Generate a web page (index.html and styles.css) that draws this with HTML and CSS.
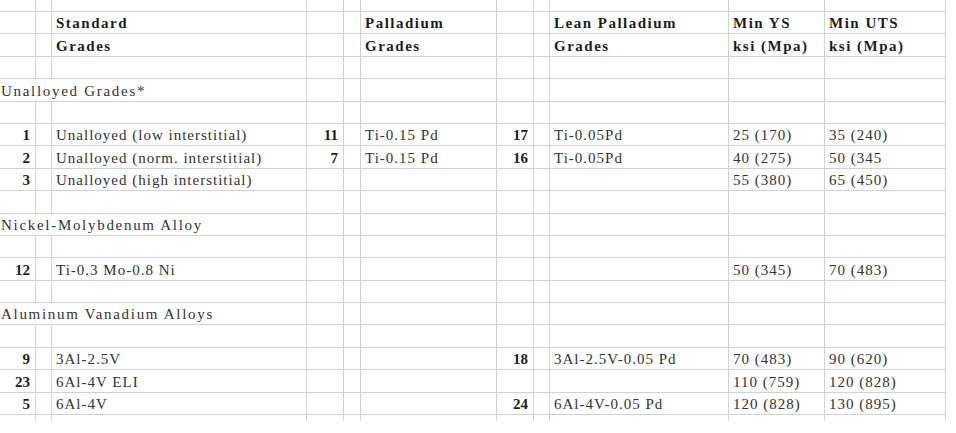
FILE: index.html
```html
<!DOCTYPE html>
<html>
<head>
<meta charset="utf-8">
<link rel="stylesheet" href="styles.css">
</head>
<body>
<div class="sheet">
  <!-- top partial row -->
  <div class="c top"></div><div class="c top"></div><div class="c top"></div><div class="c top"></div><div class="c top"></div><div class="c top"></div><div class="c top"></div><div class="c top"></div><div class="c top"></div><div class="c top"></div><div class="c top"></div>

  <!-- header row 1 -->
  <div class="c"></div><div class="c"></div><div class="c b">Standard</div><div class="c"></div><div class="c"></div><div class="c b">Palladium</div><div class="c"></div><div class="c"></div><div class="c b">Lean Palladium</div><div class="c b">Min YS</div><div class="c b">Min UTS</div>
  <!-- header row 2 -->
  <div class="c"></div><div class="c"></div><div class="c b">Grades</div><div class="c"></div><div class="c"></div><div class="c b">Grades</div><div class="c"></div><div class="c"></div><div class="c b">Grades</div><div class="c b">ksi (Mpa)</div><div class="c b">ksi (Mpa)</div>
  <!-- blank -->
  <div class="c"></div><div class="c"></div><div class="c"></div><div class="c"></div><div class="c"></div><div class="c"></div><div class="c"></div><div class="c"></div><div class="c"></div><div class="c"></div><div class="c"></div>

  <!-- Unalloyed group -->
  <div class="c grp">Unalloyed Grades*</div><div class="c"></div><div class="c"></div><div class="c"></div><div class="c"></div><div class="c"></div><div class="c"></div><div class="c"></div><div class="c"></div>
  <div class="c"></div><div class="c"></div><div class="c"></div><div class="c"></div><div class="c"></div><div class="c"></div><div class="c"></div><div class="c"></div><div class="c"></div><div class="c"></div><div class="c"></div>

  <div class="c n">1</div><div class="c"></div><div class="c">Unalloyed (low interstitial)</div><div class="c n">11</div><div class="c"></div><div class="c">Ti-0.15 Pd</div><div class="c n">17</div><div class="c"></div><div class="c">Ti-0.05Pd</div><div class="c">25 (170)</div><div class="c">35 (240)</div>
  <div class="c n">2</div><div class="c"></div><div class="c">Unalloyed (norm. interstitial)</div><div class="c n">7</div><div class="c"></div><div class="c">Ti-0.15 Pd</div><div class="c n">16</div><div class="c"></div><div class="c">Ti-0.05Pd</div><div class="c">40 (275)</div><div class="c">50 (345</div>
  <div class="c n">3</div><div class="c"></div><div class="c">Unalloyed (high interstitial)</div><div class="c"></div><div class="c"></div><div class="c"></div><div class="c"></div><div class="c"></div><div class="c"></div><div class="c">55 (380)</div><div class="c">65 (450)</div>
  <div class="c"></div><div class="c"></div><div class="c"></div><div class="c"></div><div class="c"></div><div class="c"></div><div class="c"></div><div class="c"></div><div class="c"></div><div class="c"></div><div class="c"></div>

  <!-- Nickel group -->
  <div class="c grp">Nickel-Molybdenum Alloy</div><div class="c"></div><div class="c"></div><div class="c"></div><div class="c"></div><div class="c"></div><div class="c"></div><div class="c"></div><div class="c"></div>
  <div class="c"></div><div class="c"></div><div class="c"></div><div class="c"></div><div class="c"></div><div class="c"></div><div class="c"></div><div class="c"></div><div class="c"></div><div class="c"></div><div class="c"></div>
  <div class="c n">12</div><div class="c"></div><div class="c">Ti-0.3 Mo-0.8 Ni</div><div class="c"></div><div class="c"></div><div class="c"></div><div class="c"></div><div class="c"></div><div class="c"></div><div class="c">50 (345)</div><div class="c">70 (483)</div>
  <div class="c"></div><div class="c"></div><div class="c"></div><div class="c"></div><div class="c"></div><div class="c"></div><div class="c"></div><div class="c"></div><div class="c"></div><div class="c"></div><div class="c"></div>

  <!-- Aluminum group -->
  <div class="c grp">Aluminum Vanadium Alloys</div><div class="c"></div><div class="c"></div><div class="c"></div><div class="c"></div><div class="c"></div><div class="c"></div><div class="c"></div><div class="c"></div>
  <div class="c"></div><div class="c"></div><div class="c"></div><div class="c"></div><div class="c"></div><div class="c"></div><div class="c"></div><div class="c"></div><div class="c"></div><div class="c"></div><div class="c"></div>
  <div class="c n">9</div><div class="c"></div><div class="c">3Al-2.5V</div><div class="c"></div><div class="c"></div><div class="c"></div><div class="c n">18</div><div class="c"></div><div class="c">3Al-2.5V-0.05 Pd</div><div class="c">70 (483)</div><div class="c">90 (620)</div>
  <div class="c n">23</div><div class="c"></div><div class="c">6Al-4V ELI</div><div class="c"></div><div class="c"></div><div class="c"></div><div class="c"></div><div class="c"></div><div class="c"></div><div class="c">110 (759)</div><div class="c">120 (828)</div>
  <div class="c n">5</div><div class="c"></div><div class="c">6Al-4V</div><div class="c"></div><div class="c"></div><div class="c"></div><div class="c n">24</div><div class="c"></div><div class="c">6Al-4V-0.05 Pd</div><div class="c">120 (828)</div><div class="c">130 (895)</div>

  <!-- bottom partial row -->
  <div class="c bot"></div><div class="c bot"></div><div class="c bot"></div><div class="c bot"></div><div class="c bot"></div><div class="c bot"></div><div class="c bot"></div><div class="c bot"></div><div class="c bot"></div><div class="c bot"></div><div class="c bot"></div>
</div>
</body>
</html>
```

FILE: styles.css
```css
html, body {
  margin: 0;
  padding: 0;
  background: #ffffff;
}

.sheet {
  display: grid;
  grid-template-columns: 36px 16px 255px 37px 17px 136px 37px 16px 179px 96px 121px;
  grid-template-rows: 12px repeat(18, 22.4px) 6px;
  font-family: "Liberation Serif", "Times New Roman", serif;
  font-size: 15px;
  letter-spacing: 1px;
  color: #333333;
}

.c {
  box-sizing: border-box;
  border-right: 1px solid #d2d2d2;
  border-bottom: 1px solid #d2d2d2;
  display: flex;
  align-items: flex-end;
  padding: 0 4px 1px 4px;
  line-height: 17px;
  white-space: nowrap;
  overflow: visible;
}

.c.bot {
  border-bottom: none;
}

.b {
  font-weight: bold;
  color: #1e1e1e;
  letter-spacing: 1.5px;
}

.n {
  justify-content: flex-end;
  font-weight: bold;
  color: #1e1e1e;
  padding-right: 5px;
  letter-spacing: 0;
}

.grp {
  grid-column: span 3;
  padding-left: 1px;
  letter-spacing: 1.7px;
}
```
